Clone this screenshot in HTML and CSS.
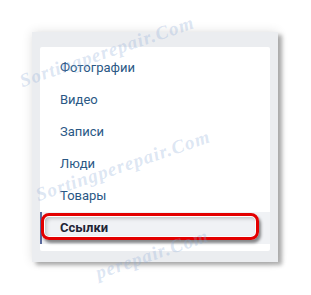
FILE: index.html
```html
<!doctype html>
<html lang="ru">
  <head>
    <meta charset="UTF-8" />
    <title>Меню</title>
    <link rel="stylesheet" href="styles.css">
  </head>
  <body>
    <div class="stage">
      <div class="panel">
        <ul class="menu">
          <li class="item">Фотографии</li>
          <li class="item">Видео</li>
          <li class="item">Записи</li>
          <li class="item">Люди</li>
          <li class="item">Товары</li>
          <li class="item selected">
            <span class="mark"></span>
            Ссылки
          </li>
        </ul>
      </div>

      <!-- watermark overlays -->
      <span class="wm wm-top">Sortingperepair.Com</span>
      <span class="wm wm-mid">Sortingperepair.Com</span>
      <span class="wm wm-bottom">perepair.Com</span>
    </div>
  </body>
</html>
```

FILE: styles.css
```css
* {
  box-sizing: border-box;
  margin: 0;
  padding: 0;
}
body {
  font-family: Roboto, "Open Sans", Arial, sans-serif;
  background-color: #fff;
  width: 311px;
  height: 295px;
  overflow: hidden;
}
.stage {
  position: relative;
  width: 311px;
  height: 295px;
  overflow: hidden;
  padding: 32px 0 0 32px;
}
.panel {
  width: 246px;
  background-color: #ebedf0;
  padding: 15px 8px 11px 8px;
  box-shadow: 4px 3px 4px rgba(0, 0, 0, 0.3), 0 0 10px rgba(0, 0, 0, 0.12);
}
.menu {
  list-style: none;
  background-color: #fff;
  padding: 5px 0 7px 0;
  border-radius: 2px;
}
.item {
  position: relative;
  height: 32px;
  line-height: 32px;
  padding-left: 20px;
  font-size: 13px;
  color: #2a5885;
}
.item.selected {
  background-color: #f0f2f5;
  color: #1f2535;
  font-weight: bold;
  border-left: 2px solid #5b6a9c;
  padding-left: 18px;
}
.mark {
  position: absolute;
  left: -1px;
  top: 1px;
  width: 218px;
  height: 27px;
  border: 3px solid #e30000;
  border-radius: 8px;
  box-shadow: inset 0 0 0 1px #fff, inset 2px 2px 4px rgba(0, 0, 0, 0.25),
    2px 3px 3px rgba(0, 0, 0, 0.45);
}
.wm {
  position: absolute;
  font-family: "Liberation Serif", serif;
  font-style: italic;
  font-weight: bold;
  font-size: 19px;
  color: rgba(140, 170, 215, 0.3);
  letter-spacing: 1px;
  transform: rotate(-19deg);
  transform-origin: left bottom;
  white-space: nowrap;
  pointer-events: none;
}
.wm-top {
  left: 24px;
  top: 70px;
}
.wm-mid {
  left: 40px;
  top: 184px;
}
.wm-bottom {
  left: 100px;
  top: 262px;
}
```
